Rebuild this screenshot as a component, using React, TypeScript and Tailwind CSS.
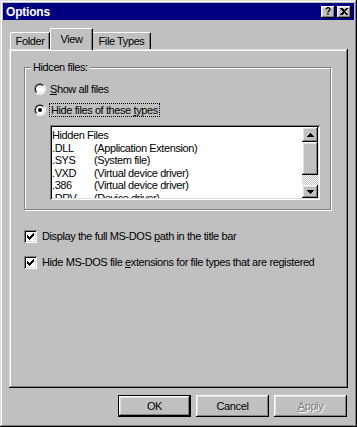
import React from "react";

const bevelOut =
  "shadow-[inset_-1px_-1px_0_#000,inset_1px_1px_0_#fff,inset_-2px_-2px_0_#808080,inset_2px_2px_0_#dfdfdf]";
const bevelOutWin =
  "shadow-[inset_-1px_-1px_0_#000,inset_1px_1px_0_#dfdfdf,inset_-2px_-2px_0_#808080,inset_2px_2px_0_#fff]";
const sunken =
  "shadow-[inset_1px_1px_0_#808080,inset_-1px_-1px_0_#fff,inset_2px_2px_0_#000,inset_-2px_-2px_0_#dfdfdf]";

function Radio({ checked }: { checked?: boolean }) {
  return (
    <div className="w-[12px] h-[12px] rounded-full border border-t-[#808080] border-l-[#808080] border-r-white border-b-white shrink-0">
      <div className="w-full h-full rounded-full border border-t-black border-l-black border-r-[#dfdfdf] border-b-[#dfdfdf] bg-white flex items-center justify-center">
        {checked && <div className="w-[4px] h-[4px] rounded-full bg-black" />}
      </div>
    </div>
  );
}

function Check() {
  return (
    <div className={`w-[13px] h-[13px] bg-white shrink-0 flex items-center justify-center ${sunken}`}>
      <svg width="7" height="7" viewBox="0 0 7 7" shapeRendering="crispEdges">
        <path d="M0 2 L2 4 L6 0 L7 0 L7 3 L2 7 L0 5 Z" fill="#000" />
      </svg>
    </div>
  );
}

function Tri({ up }: { up?: boolean }) {
  return (
    <svg width="7" height="4" viewBox="0 0 7 4" shapeRendering="crispEdges">
      {up ? <path d="M3 0 H4 V1 H5 V2 H6 V3 H7 V4 H0 V3 H1 V2 H2 V1 H3 Z" fill="#000" /> : <path d="M0 0 H7 V1 H6 V2 H5 V3 H4 V4 H3 V3 H2 V2 H1 V1 H0 Z" fill="#000" />}
    </svg>
  );
}

const rows: [string, string][] = [
  [".DLL", "(Application Extension)"],
  [".SYS", "(System file)"],
  [".VXD", "(Virtual device driver)"],
  [".386", "(Virtual device driver)"],
  [".DRV", "(Device driver)"],
];

export default function App() {
  return (
    <div
      className={`w-[357px] h-[427px] bg-[#c0c0c0] p-[3px] flex flex-col text-[11px] tracking-[-0.4px] text-black ${bevelOutWin}`}
      style={{ fontFamily: '"Liberation Sans", Arial, sans-serif' }}
    >
      {/* Title bar */}
      <div className="h-[17px] bg-[#000080] flex items-center justify-between pl-[3px] pr-[3px]">
        <span className="text-white font-bold text-[12px] leading-none tracking-[-0.2px]">Options</span>
        <div className="flex gap-[2px]">
          <div className={`w-[14px] h-[12px] bg-[#c0c0c0] flex items-center justify-center font-bold text-[10px] leading-none tracking-normal ${bevelOut}`}>?</div>
          <div className={`w-[14px] h-[12px] bg-[#c0c0c0] flex items-center justify-center ${bevelOut}`}>
            <svg width="8" height="7" viewBox="0 0 8 7" shapeRendering="crispEdges">
              <path d="M0 0 H2 L4 2 L6 0 H8 L5 3.5 L8 7 H6 L4 5 L2 7 H0 L3 3.5 Z" fill="#000" />
            </svg>
          </div>
        </div>
      </div>

      {/* Tabs */}
      <div className="mt-[8px] ml-[6px] flex items-end h-[21px]">
        <div className="ml-[1px] w-[40px] h-[17px] border-l border-t border-white rounded-tl-[2px] border-r border-r-black shadow-[inset_-1px_0_0_#808080] flex items-center justify-center">
          Folder
        </div>
        <div className="relative z-10 w-[43px] h-[22px] -mb-[1px] bg-[#c0c0c0] border-l border-t border-white rounded-tl-[2px] border-r border-r-black shadow-[inset_-1px_0_0_#808080] flex items-start justify-center pt-[2px]">
          View
        </div>
        <div className="w-[58px] h-[17px] border-t border-white rounded-tr-[2px] border-r border-r-black shadow-[inset_-1px_0_0_#808080] flex items-center justify-center">
          File Types
        </div>
      </div>

      {/* Panel */}
      <div className={`ml-[6px] w-[339px] h-[339px] flex flex-col pl-[15px] pt-[18px] ${bevelOutWin}`}>
        {/* Group box */}
        <div className="relative w-[307px] h-[143px] border border-[#808080] shadow-[inset_1px_1px_0_#fff,1px_1px_0_#fff] flex flex-col pl-[9px] pt-[13px]">
          <div className="absolute -top-[7px] left-[6px] bg-[#c0c0c0] px-[2px] leading-[13px]">Hidcen files:</div>
          <div className="flex items-center h-[16px] gap-[4px]">
            <Radio />
            <span><u>S</u>how all files</span>
          </div>
          <div className="flex items-center h-[16px] gap-[3px] mt-[5px]">
            <Radio checked />
            <span className="border border-dotted border-black px-[1px] leading-[12px]">Hide files of these <u>t</u>ypes</span>
          </div>
          <div className={`ml-[16px] mt-[7px] w-[270px] h-[75px] bg-white p-[2px] flex ${sunken}`}>
            <div className="flex-1 overflow-hidden leading-[12.5px] pt-[2px]">
              <div>Hidden Files</div>
              {rows.map(([a, b]) => (
                <div key={a} className="flex">
                  <span className="w-[42px] shrink-0">{a}</span>
                  <span className="whitespace-nowrap">{b}</span>
                </div>
              ))}
            </div>
            <div className="w-[16px] flex flex-col">
              <div className={`h-[15px] bg-[#c0c0c0] flex items-center justify-center ${bevelOut}`}><Tri up /></div>
              <div className={`h-[33px] bg-[#c0c0c0] ${bevelOut}`} />
              <div className="flex-1 bg-[repeating-conic-gradient(#fff_0_25%,#c0c0c0_0_50%)] [background-size:2px_2px]" />
              <div className={`h-[13px] bg-[#c0c0c0] flex items-center justify-center ${bevelOut}`}><Tri /></div>
            </div>
          </div>
        </div>

        {/* Checkboxes */}
        <div className="flex items-center h-[16px] gap-[5px] mt-[18px]">
          <Check />
          <span>Display the full MS-DOS <u>p</u>ath in the title bar</span>
        </div>
        <div className="flex items-center h-[16px] gap-[5px] mt-[10px]">
          <Check />
          <span>Hide MS-DOS file <u>e</u>xtensions for file types that are registered</span>
        </div>
      </div>

      {/* Buttons */}
      <div className="mt-[7px] flex justify-end gap-[5px] pr-[7px]">
        <div className="w-[73px] h-[22px] border border-black">
          <div className={`w-full h-full bg-[#c0c0c0] flex items-center justify-center ${bevelOut}`}>OK</div>
        </div>
        <div className={`w-[73px] h-[22px] bg-[#c0c0c0] flex items-center justify-center ${bevelOut}`}>Cancel</div>
        <div className={`w-[73px] h-[22px] bg-[#c0c0c0] flex items-center justify-center text-[#808080] [text-shadow:1px_1px_0_#fff] ${bevelOut}`}>
          <span><u>A</u>pply</span>
        </div>
      </div>
    </div>
  );
}
